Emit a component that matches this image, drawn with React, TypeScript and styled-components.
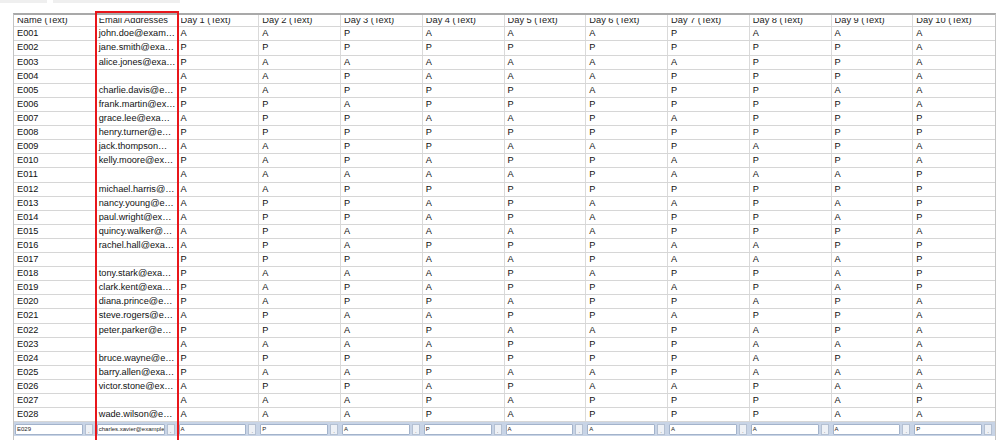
import styled, { createGlobalStyle } from "styled-components";

const GlobalStyle = createGlobalStyle`
  html, body {
    margin: 0;
    padding: 0;
    overflow: hidden;
    background: #ffffff;
  }
  body {
    font-family: "Liberation Sans", Arial, sans-serif;
  }
`;

const COLUMNS = [
  "Name (Text)",
  "Email Addresses",
  "Day 1 (Text)",
  "Day 2 (Text)",
  "Day 3 (Text)",
  "Day 4 (Text)",
  "Day 5 (Text)",
  "Day 6 (Text)",
  "Day 7 (Text)",
  "Day 8 (Text)",
  "Day 9 (Text)",
  "Day 10 (Text)",
];

// id | email | attendance for day 1..10
const RAW = [
  "E001|john.doe@example.com|AAPAAAPAAA",
  "E002|jane.smith@example.com|PPPPPPPPPA",
  "E003|alice.jones@example.com|PAAAAAAPPA",
  "E004||AAPAAAPPPA",
  "E005|charlie.davis@example.com|PAPPPAPPAA",
  "E006|frank.martin@example.com|PPAPPPPPPA",
  "E007|grace.lee@example.com|APPAAPAPPP",
  "E008|henry.turner@example.com|PPPPPPPPPP",
  "E009|jack.thompson@example.com|AAPPAAPAPA",
  "E010|kelly.moore@example.com|PAPAPPAPPA",
  "E011||AAAAAPAAAP",
  "E012|michael.harris@example.com|AAPPPPPPPP",
  "E013|nancy.young@example.com|APPAPAAPAP",
  "E014|paul.wright@example.com|APPAPAPPAP",
  "E015|quincy.walker@example.com|APAAAAPPPA",
  "E016|rachel.hall@example.com|APAPPPAAPP",
  "E017||PPPAAPAAAP",
  "E018|tony.stark@example.com|PAAAPAPPAP",
  "E019|clark.kent@example.com|PAPAPPAPAP",
  "E020|diana.prince@example.com|PAPPAPPAPA",
  "E021|steve.rogers@example.com|APAAPPAPPA",
  "E022|peter.parker@example.com|PPAPAAPAPA",
  "E023||AAAAPPPAAA",
  "E024|bruce.wayne@example.com|PPPPPPPAPA",
  "E025|barry.allen@example.com|PAAPAAPAAA",
  "E026|victor.stone@example.com|APPAPAAPAA",
  "E027||AAAPAPPPAP",
  "E028|wade.wilson@example.com|AAAPAPPPAA",
];

const ROWS = RAW.map((line) => {
  const [id, email, days] = line.split("|");
  return [id, email, ...days.split("")];
});

const FILTER = [
  "E029",
  "charles.xavier@example.com",
  "A",
  "P",
  "A",
  "P",
  "A",
  "A",
  "A",
  "A",
  "A",
  "P",
];

// faint strip above the grid
const TopStrip = styled.div`
  display: flex;
  gap: 6px;
  height: 3px;
`;

const StripPiece = styled.div<{ width: number }>`
  width: ${({ width }) => width}px;
  background: #efefef;
`;

const GridWrap = styled.div`
  position: relative;
  width: 983px;
  margin: 10px 0 0 13px;
  box-sizing: border-box;
  border-top: 2px solid #a9a9a9;
  border-left: 1px solid #c4c4c4;
  border-right: 1px solid #c4c4c4;
`;

const Row = styled.div<{ height: number }>`
  display: grid;
  grid-template-columns: repeat(12, 1fr);
  height: ${({ height }) => height}px;
  box-sizing: border-box;
  border-bottom: 1px solid #d6d6d6;
`;

const HeaderCell = styled.div`
  padding: 0 3px;
  border-right: 1px solid #dadada;
  overflow: hidden;
  &:last-child {
    border-right: none;
  }
`;

const HeaderClip = styled.div`
  margin-top: 2.5px;
  height: 9.5px;
  overflow: hidden;
`;

const HeaderText = styled.span`
  display: block;
  margin-top: -2.4px;
  font-size: 9.3px;
  line-height: 10px;
  color: #222;
  white-space: nowrap;
`;

const Cell = styled.div`
  padding: 0 1px 0 3px;
  border-right: 1px solid #dadada;
  font-size: 9.2px;
  line-height: 13px;
  color: #111;
  white-space: nowrap;
  overflow: hidden;
  text-overflow: ellipsis;
  &:last-child {
    border-right: none;
  }
`;

const FilterRow = styled.div`
  display: grid;
  grid-template-columns: repeat(12, 1fr);
  height: 14px;
  background: #c8d4e6;
`;

const FilterCell = styled.div`
  display: flex;
  align-items: center;
  gap: 2px;
  padding: 0 3px 0 1px;
  min-width: 0;
`;

const FilterInput = styled.div`
  flex: 1;
  min-width: 0;
  height: 11px;
  box-sizing: border-box;
  border: 1px solid #a3b3cb;
  border-radius: 1px;
  background: #ffffff;
  padding: 0 1px;
  font-size: 6px;
  line-height: 9px;
  color: #222;
  white-space: nowrap;
  overflow: hidden;
`;

const FilterButton = styled.div`
  width: 8px;
  height: 11px;
  box-sizing: border-box;
  border: 1px solid #b4c0d2;
  background: #eef1f6;
  font-size: 6px;
  line-height: 12px;
  color: #666;
  text-align: center;
`;

const BottomSpace = styled.div`
  height: 6px;
`;

// red highlight around the email column
const Highlight = styled.div`
  position: absolute;
  left: 81px;
  top: -4px;
  width: 84px;
  height: 460px;
  box-sizing: border-box;
  border: 2px solid #e8161b;
  pointer-events: none;
`;

export default function App() {
  return (
    <>
      <GlobalStyle />
      <TopStrip>
        <StripPiece width={47} />
        <StripPiece width={127} />
      </TopStrip>
      <GridWrap>
        <Row height={12.3}>
          {COLUMNS.map((c) => (
            <HeaderCell key={c}>
              <HeaderClip>
                <HeaderText>{c}</HeaderText>
              </HeaderClip>
            </HeaderCell>
          ))}
        </Row>
        {ROWS.map((r) => (
          <Row key={r[0]} height={14.11}>
            {r.map((v, i) => (
              <Cell key={i}>{v}</Cell>
            ))}
          </Row>
        ))}
        <FilterRow>
          {FILTER.map((v, i) => (
            <FilterCell key={i}>
              <FilterInput>{v}</FilterInput>
              <FilterButton>.</FilterButton>
            </FilterCell>
          ))}
        </FilterRow>
        <BottomSpace />
        <Highlight />
      </GridWrap>
    </>
  );
}
